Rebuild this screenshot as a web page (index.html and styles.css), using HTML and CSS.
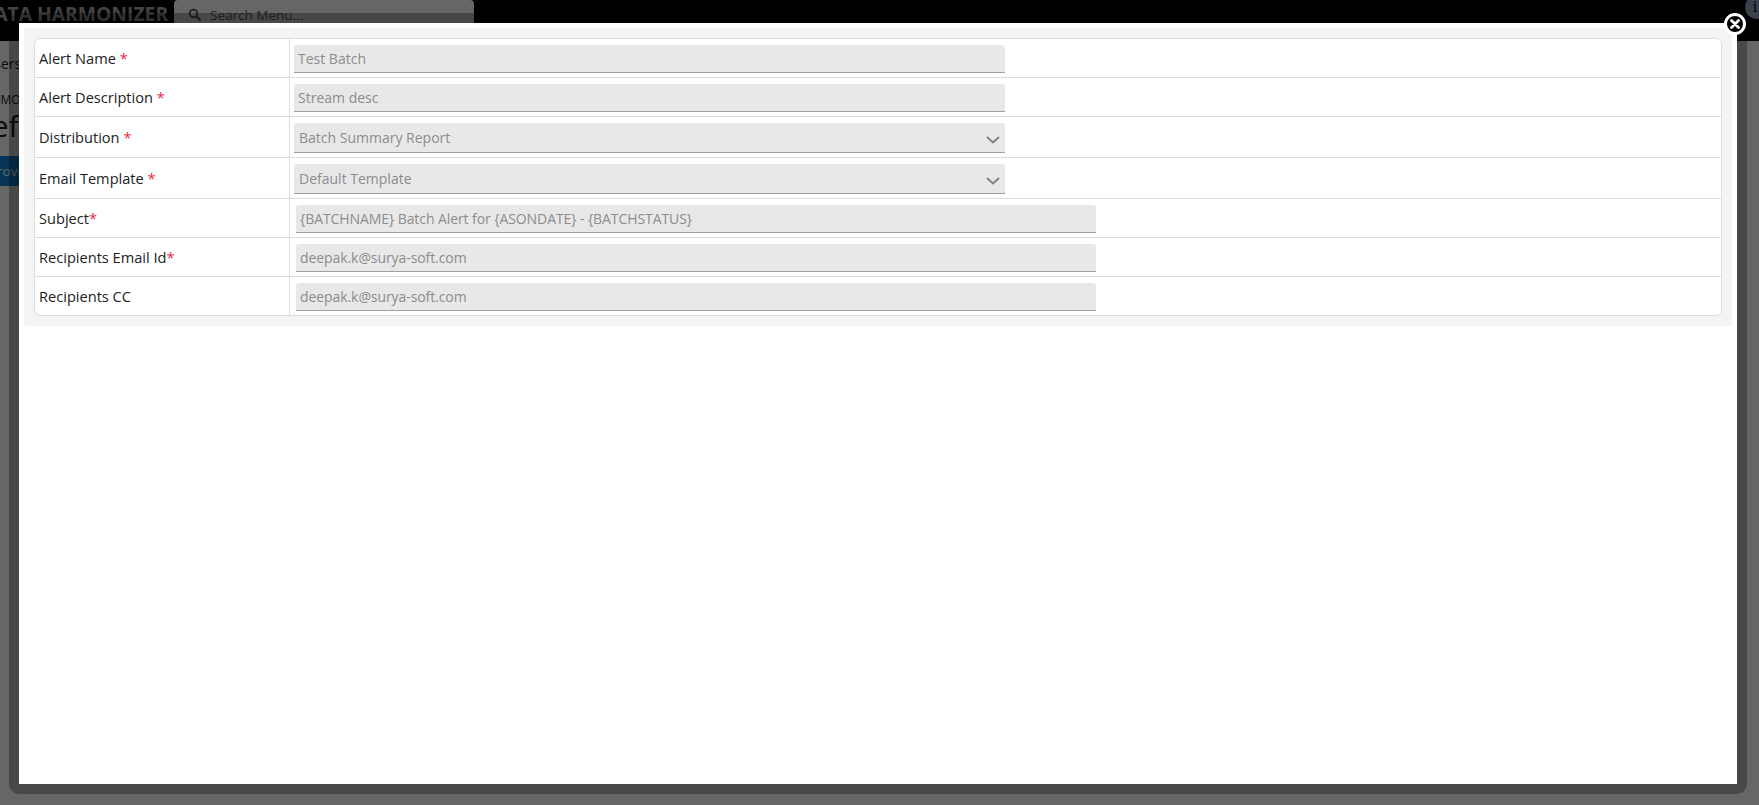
FILE: index.html
```html
<!DOCTYPE html>
<html lang="en">
<head>
    <meta charset="UTF-8">
    <meta name="viewport" content="width=device-width, initial-scale=1.0">
    <title>Alert Definition</title>
    <link rel="stylesheet" href="styles.css">
</head>
<body>
    <!-- Page behind the popup -->
    <div class="page">
        <header class="topbar">
            <div class="brand">DATA HARMONIZER</div>
            <div class="search">
                <svg class="search-icon" width="14" height="14" viewBox="0 0 14 14">
                    <circle cx="5.5" cy="5.5" r="3.8" fill="none" stroke="currentColor" stroke-width="2"/>
                    <path d="M8.5 8.5 L12.5 12.5" stroke="currentColor" stroke-width="2.4"/>
                </svg>
                <span>Search Menu...</span>
            </div>
            <div class="info">i</div>
        </header>
        <div class="crumb-top">Users</div>
        <div class="crumb">DEMO</div>
        <h1 class="page-title">Define</h1>
        <button class="approve">Approve</button>
    </div>

    <div class="overlay"></div>

    <!-- Popup -->
    <div class="popup">
        <div class="popup-inner">
            <span class="close">
                <svg width="10" height="10" viewBox="0 0 10 10">
                    <path d="M1.5 1.5 L8.5 8.5 M8.5 1.5 L1.5 8.5" stroke="#fff" stroke-width="2.8" stroke-linecap="round"/>
                </svg>
            </span>
            <div class="panel">
                <div class="form-table">
                    <div class="row">
                        <div class="label">Alert Name <b>*</b></div>
                        <div class="value"><input class="field short" type="text" value="Test Batch" disabled></div>
                    </div>
                    <div class="row">
                        <div class="label">Alert Description <b>*</b></div>
                        <div class="value"><input class="field short" type="text" value="Stream desc" disabled></div>
                    </div>
                    <div class="row row-select">
                        <div class="label">Distribution <b>*</b></div>
                        <div class="value">
                            <div class="select-wrap">
                                <select class="field select" disabled><option>Batch Summary Report</option></select>
                                <svg class="chevron" width="14" height="8" viewBox="0 0 14 8">
                                    <path d="M1 1 L7 6.5 L13 1" fill="none" stroke="#808080" stroke-width="2"/>
                                </svg>
                            </div>
                        </div>
                    </div>
                    <div class="row row-select">
                        <div class="label">Email Template <b>*</b></div>
                        <div class="value">
                            <div class="select-wrap">
                                <select class="field select" disabled><option>Default Template</option></select>
                                <svg class="chevron" width="14" height="8" viewBox="0 0 14 8">
                                    <path d="M1 1 L7 6.5 L13 1" fill="none" stroke="#808080" stroke-width="2"/>
                                </svg>
                            </div>
                        </div>
                    </div>
                    <div class="row">
                        <div class="label">Subject<b>*</b></div>
                        <div class="value wide-value"><input class="field wide" type="text" value="{BATCHNAME} Batch Alert for {ASONDATE} - {BATCHSTATUS}" disabled></div>
                    </div>
                    <div class="row">
                        <div class="label">Recipients Email Id<b>*</b></div>
                        <div class="value wide-value"><input class="field wide" type="text" value="deepak.k@surya-soft.com" disabled></div>
                    </div>
                    <div class="row">
                        <div class="label">Recipients CC</div>
                        <div class="value wide-value"><input class="field wide" type="text" value="deepak.k@surya-soft.com" disabled></div>
                    </div>
                </div>
            </div>
        </div>
    </div>
</body>
</html>
```

FILE: styles.css
```css
html, body {
    height: 100%;
}
body {
    margin: 0;
    overflow: hidden;
    background: #fff;
    font-family: "Open Sans", Arial, sans-serif;
    font-size: 14px;
    color: #222;
}

/* page behind */
.page {
    height: 805px;
    overflow: hidden;
}
.topbar {
    display: flex;
    height: 41px;
    background: #000;
}
.brand {
    width: 194px;
    margin-left: -20px;
    flex: none;
    font-size: 19.3px;
    font-weight: 700;
    line-height: 28px;
    white-space: nowrap;
    color: #aaa;
}
.search {
    display: flex;
    align-items: center;
    gap: 8px;
    width: 300px;
    height: 32px;
    padding: 0 0 3px 14px;
    box-sizing: border-box;
    border-radius: 4px;
    background: #fff;
    font-size: 13.5px;
    color: #666;
}
.search-icon {
    flex: none;
}
.info {
    width: 24px;
    height: 24px;
    margin: -5px -10px 0 auto;
    padding-right: 4px;
    box-sizing: border-box;
    border-radius: 50%;
    background: #8fa3bd;
    text-align: center;
    font-family: "DejaVu Serif", serif;
    line-height: 24px;
    color: #000;
}
.crumb-top {
    margin: 13px 0 0 -16px;
    line-height: 20px;
}
.crumb {
    margin: 18px 0 0 -15px;
    font-size: 12px;
    line-height: 16px;
}
.page-title {
    margin: -3px 0 0 -30px;
    font-size: 30px;
    font-weight: 400;
    line-height: 42px;
}
.approve {
    display: block;
    width: 90px;
    height: 30px;
    margin: 9px 0 0 -30px;
    padding: 0 0 0 2px;
    border: none;
    background: #0c86d8;
    color: #fff;
    font-family: inherit;
    font-size: 13.5px;
    text-align: left;
}

.overlay {
    position: fixed;
    left: 0;
    top: 0;
    width: 100%;
    height: 100%;
    background: rgba(0, 0, 0, 0.6);
}

/* popup */
.popup {
    position: fixed;
    left: 9px;
    top: 13px;
    width: 1738px;
    height: 781px;
    padding: 10px;
    box-sizing: border-box;
    border-radius: 10px;
    background: rgba(0, 0, 0, 0.3);
}
.popup-inner {
    position: relative;
    height: 100%;
    padding: 5px;
    box-sizing: border-box;
    background: #fff;
}
.close {
    position: absolute;
    right: -9px;
    top: -10px;
    display: flex;
    align-items: center;
    justify-content: center;
    width: 22px;
    height: 22px;
    box-sizing: border-box;
    border: 3px solid #fff;
    border-radius: 50%;
    background: #000;
}
.panel {
    padding: 10px;
    border-radius: 3px;
    background: #f4f4f4;
}
.form-table {
    border: 1px solid #ddd;
    border-radius: 6px;
    background: #fff;
}
.row {
    display: grid;
    grid-template-columns: 255px 1fr;
    height: 39px;
    box-sizing: border-box;
    border-bottom: 1px solid #ddd;
}
.row:last-child {
    height: 38px;
    border-bottom: none;
}
.row-select {
    height: 41px;
}
.label {
    display: flex;
    align-items: center;
    gap: 4px;
    padding-left: 4px;
    border-right: 1px solid #ddd;
    font-size: 14.6px;
    white-space: pre;
}
.label b {
    margin-left: -4px;
    font-weight: 400;
    color: #f0273c;
}
.value {
    padding: 6px 0 0 4px;
}
.wide-value {
    padding-left: 6px;
}
.field {
    display: block;
    height: 28px;
    padding: 0 4px;
    box-sizing: border-box;
    border: none;
    border-bottom: 1px solid #a0a0a0;
    border-radius: 3px 3px 0 0;
    background: #e8e8e8;
    font-family: inherit;
    font-size: 14px;
    color: #8c8c8c;
    opacity: 1;
}
.short {
    width: 711px;
}
.wide {
    width: 800px;
    letter-spacing: -0.08px;
}
.select-wrap {
    position: relative;
    width: 711px;
}
.select {
    width: 100%;
    height: 30px;
    padding: 0 5px;
    appearance: none;
    -webkit-appearance: none;
}
.chevron {
    position: absolute;
    right: 5px;
    top: 13px;
}
```
